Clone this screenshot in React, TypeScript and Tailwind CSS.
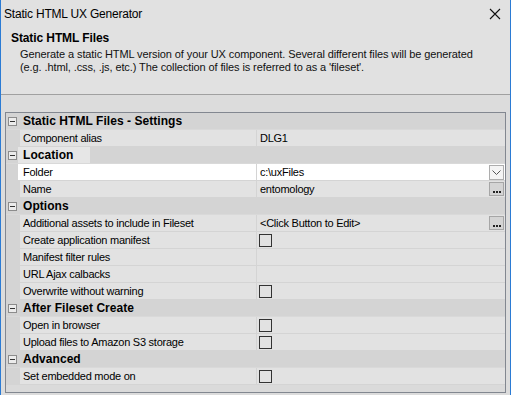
import React from "react";

type Row =
  | { kind: "cat"; label: string; hl?: boolean }
  | { kind: "prop"; label: string; value?: string; check?: boolean; btn?: "dots" | "drop"; selected?: boolean };

const rows: Row[] = [
  { kind: "cat", label: "Static HTML Files - Settings" },
  { kind: "prop", label: "Component alias", value: "DLG1" },
  { kind: "cat", label: "Location", hl: true },
  { kind: "prop", label: "Folder", value: "c:\\uxFiles", btn: "drop", selected: true },
  { kind: "prop", label: "Name", value: "entomology", btn: "dots" },
  { kind: "cat", label: "Options" },
  { kind: "prop", label: "Additional assets to include in Fileset", value: "<Click Button to Edit>", btn: "dots" },
  { kind: "prop", label: "Create application manifest", check: true },
  { kind: "prop", label: "Manifest filter rules" },
  { kind: "prop", label: "URL Ajax calbacks" },
  { kind: "prop", label: "Overwrite without warning", check: true },
  { kind: "cat", label: "After Fileset Create" },
  { kind: "prop", label: "Open in browser", check: true },
  { kind: "prop", label: "Upload files to Amazon S3 storage", check: true },
  { kind: "cat", label: "Advanced" },
  { kind: "prop", label: "Set embedded mode on", check: true },
];

// kleine Minus-Box links neben einer Kategorie
function Expander() {
  return (
    <div className="w-[9px] h-[9px] border border-[#8c8c8c] bg-[#ececec] flex items-center justify-center">
      <div className="w-[5px] h-px bg-[#333]" />
    </div>
  );
}

function DotsButton() {
  return (
    <div className="w-[15px] h-[14px] border border-[#a6a6a6] bg-[#d4d4d4] flex items-end justify-center pb-[2px]">
      <div className="flex gap-[1px]">
        <div className="w-[2px] h-[2px] bg-[#222]" />
        <div className="w-[2px] h-[2px] bg-[#222]" />
        <div className="w-[2px] h-[2px] bg-[#222]" />
      </div>
    </div>
  );
}

function DropButton() {
  return (
    <div className="w-[15px] h-[15px] border border-[#adadad] bg-[#f4f4f4] flex items-center justify-center">
      <svg width="9" height="5" viewBox="0 0 9 5">
        <path d="M0.5 0.5 L4.5 4.5 L8.5 0.5" fill="none" stroke="#555" strokeWidth="1" />
      </svg>
    </div>
  );
}

function GridRow({ row }: { row: Row }) {
  if (row.kind === "cat") {
    return (
      <div className="h-[17px] flex bg-[#d4d4d4] border-b border-[#d9d9d9]">
        <div className="w-[14px] flex items-center pl-[2px]">
          <Expander />
        </div>
        <div
          className={
            "h-full flex items-center font-bold text-[12px] tracking-[0.05px] pl-[5px] pr-[2px] -ml-[2px] " +
            (row.hl ? "bg-[#e6e6e6] w-[72px]" : "")
          }
        >
          {row.label}
        </div>
      </div>
    );
  }
  const cell = row.selected ? "bg-white" : "bg-[#e2e2e2]";
  return (
    <div className="h-[17px] flex border-b border-[#d4d4d4]">
      <div className="w-[14px] bg-[#d4d4d4]" />
      <div
        className={
          "flex items-center whitespace-nowrap overflow-hidden " +
          cell +
          (row.selected ? " -ml-[2px] w-[238px] pl-[5px]" : " w-[236px] pl-[3px]")
        }
      >
        {row.label}
      </div>
      <div className="w-px bg-[#d4d4d4]" />
      <div className={"flex-1 flex items-center pr-px whitespace-nowrap " + cell + (row.check ? " pl-[2px]" : " pl-[3px]")}>
        {row.check ? (
          <div className="w-[13px] h-[13px] border border-[#333] mt-[1px]" />
        ) : (
          <span>{row.value}</span>
        )}
        <div className="flex-1" />
        {row.btn === "dots" && <DotsButton />}
        {row.btn === "drop" && <DropButton />}
      </div>
    </div>
  );
}

export default function App() {
  return (
    <div
      className="w-[511px] h-[395px] bg-[#e1e1e1] border-l border-r border-[#2b7bd4] flex flex-col text-black overflow-hidden"
      style={{ fontFamily: '"Liberation Sans", Arial, sans-serif' }}
    >
      {/* barra del titolo */}
      <div className="h-[27px] flex items-center pl-[3px] pr-[9px] text-[12px] tracking-[-0.2px]">
        <span className="pt-[1px]">Static HTML UX Generator</span>
        <div className="flex-1" />
        <svg width="12" height="12" viewBox="0 0 12 12">
          <path d="M1 1 L11 11 M11 1 L1 11" stroke="#111" strokeWidth="1.1" />
        </svg>
      </div>

      {/* intestazione */}
      <div className="h-[67px] px-[10px] pt-[3px]">
        <div className="font-bold text-[12px] leading-[16px] tracking-[-0.1px]">Static HTML Files</div>
        <div className="pl-[9px] text-[11px] leading-[13px] mt-[2px] text-[#111] whitespace-nowrap tracking-[-0.1px]">
          Generate a static HTML version of your UX component. Several different files will be generated
          <br />
          (e.g. .html, .css, .js, etc.) The collection of files is referred to as a 'fileset'.
        </div>
      </div>
      <div className="h-px bg-[#a0a0a0]" />

      {/* property grid */}
      <div className="flex-1 bg-[#dcdcdc] pt-[17px] pl-[4px] pr-[4px] pb-[2px]">
        <div className="h-[281px] border border-[#828790] bg-[#dadada] text-[11px] tracking-[-0.25px] flex flex-col">
          {rows.map((r, i) => (
            <GridRow key={i} row={r} />
          ))}
        </div>
      </div>
    </div>
  );
}
